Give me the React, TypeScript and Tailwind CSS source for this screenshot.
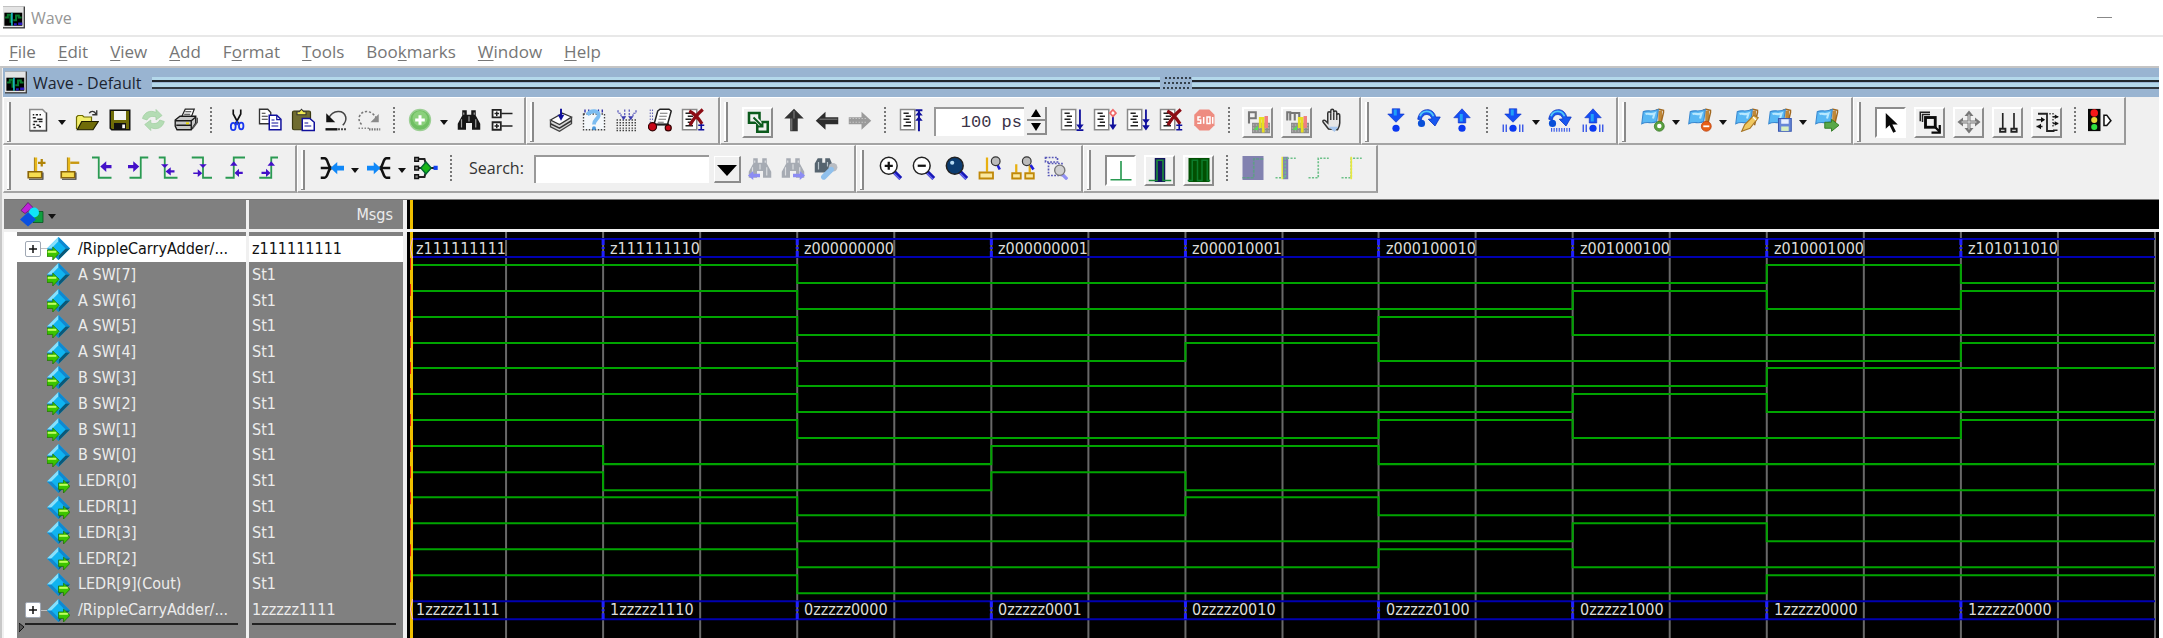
import React from "react";

type Kids = { children?: React.ReactNode };

/* ---------- icon helpers ---------- */

function Ico({ children }: Kids) {
  return (
    <svg viewBox="0 0 16 16" className="h-[24px] w-[24px] shrink-0" aria-hidden="true">
      {children}
    </svg>
  );
}

const NAVY = "#10109c";
const GREEN = "#2a9a52";
const PURPLE = "#4410c8";

const WaveLogo = () => (
  <svg viewBox="0 0 16 16" className="h-[23px] w-[22px] shrink-0" aria-hidden="true">
    <rect width="16" height="16" fill="#404040" />
    <rect width="15" height="15" fill="#e4e4e4" />
    <rect x="1" y="4.5" width="13" height="9.5" fill="#000" />
    <path d="M1.5 8h2v-2h2v5h1M7.500 10h2V6.500h2V8h2" stroke="#087a2c" strokeWidth="1.500" fill="none" />
    <path d="M6.500 4.500V14" stroke="#20d8e8" strokeWidth="1" />
    <path d="M8 13h2M11 12.500h3" stroke="#2a18c0" strokeWidth="1.800" />
  </svg>
);

const NewDoc = () => (
  <Ico>
    <path d="M2.500 1h8.500l2.500 2.500V15h-11z" fill="#fbfbfb" stroke="#8a8a8a" />
    <path d="M13.800 3v12.300H2.500" stroke="#333" fill="none" strokeWidth=".7" />
    <path d="M4.500 4.500h1m1 0h1.500m1 0h1M4.500 6.500h2m1 1h3.500M5 9h2.500m1 0h2.500M4.500 11h1.500m1 .5h2M5 13h1.500m2-.5h1.500" stroke="#222" strokeWidth="1" />
  </Ico>
);
const OpenIcon = () => (
  <Ico>
    <path d="M1 14V6l1-1h3l1 1h5v3" fill="#f2ee6a" stroke="#6d6a00" strokeWidth=".8" />
    <path d="M1.500 14.500 4.500 9h11l-3.500 5.500z" fill="#6f6c08" stroke="#1d1c00" strokeWidth=".8" />
    <path d="M9.500 3.500c1-1.800 3.500-1.800 4.500.5M14.500 1.500v3h-3" fill="none" stroke="#333" strokeWidth=".9" />
  </Ico>
);
const SaveIcon = () => (
  <Ico>
    <path d="M1.500 1.500h13v13h-12l-1-1z" fill="#6f6c08" stroke="#111" />
    <rect x="4" y="2" width="8" height="6" fill="#f4f4f4" />
    <rect x="4" y="10" width="8" height="4.500" fill="#111" />
    <rect x="9.500" y="11" width="1.800" height="2.500" fill="#fff" />
  </Ico>
);
const RefreshIcon = () => (
  <Ico>
    <path d="M1 7c1-4 5-6 9-4V1l4 4-4 3V6c-3-1-5 0-6 2z" fill="#b4dcb4" stroke="#a2cfa2" strokeWidth=".5" />
    <path d="M15.500 9c-1 4-5 6-9 4v2l-4-4 4-3v2c3 1 5 0 6-2z" fill="#b4dcb4" stroke="#a2cfa2" strokeWidth=".5" />
  </Ico>
);
const PrintIcon = () => (
  <Ico>
    <path d="M5 6 7.500.8h6L11.500 6" fill="#fff" stroke="#222" strokeWidth=".8" />
    <path d="M7.500 2.500h4M6.800 4.200h4" stroke="#333" strokeWidth=".7" />
    <path d="M.8 8 4 5.500h10.500V10l-3 4.500H2L.8 12z" fill="#c8c8c8" stroke="#1a1a1a" strokeWidth=".9" />
    <path d="M1 8.500h10.500L14.500 6M11.500 8.500v6M1.500 11.500h10" stroke="#1a1a1a" strokeWidth=".9" fill="none" />
    <path d="M8 10.200h2" stroke="#e8d800" strokeWidth="1.200" />
    <path d="M12.500 13.500l3-4V6.500" stroke="#555" strokeWidth="1" fill="none" />
  </Ico>
);
const CutIcon = () => (
  <Ico>
    <path d="M5.500 1v3L9 10.500M10.500 1v3L7 10.500" stroke="#111" strokeWidth="1.100" fill="none" />
    <ellipse cx="5.500" cy="12.300" rx="1.600" ry="2.400" fill="none" stroke="#1838f0" strokeWidth="1.200" />
    <ellipse cx="10.800" cy="12" rx="1.500" ry="2.200" fill="none" stroke="#1838f0" strokeWidth="1.200" />
    <path d="M8 8.500v3" stroke="#1838f0" strokeWidth="1.200" />
  </Ico>
);
const CopyIcon = () => (
  <Ico>
    <path d="M1 .8h5.500L8.500 3v7.500H1z" fill="#fff" stroke="#333" strokeWidth=".9" />
    <path d="M2.500 3.500h2.500M2.500 5.500h4M2.500 7.500h4" stroke="#333" strokeWidth=".8" />
    <path d="M7.500 4.800h5l2.800 2.700v7H7.500z" fill="#fff" stroke={NAVY} strokeWidth="1" />
    <path d="M12.500 5v2.800h2.500M9 8h2M9 10h4.500M9 12h4.500" stroke={NAVY} strokeWidth=".8" fill="none" />
  </Ico>
);
const PasteIcon = () => (
  <Ico>
    <rect x="1" y="2" width="12" height="12.500" rx="1" fill="#6f6c30" stroke="#3a3810" strokeWidth=".8" />
    <path d="M4 4.500V2.500h1.500L7 .8l1.500 1.700H10v2z" fill="#f0ea50" stroke="#333" strokeWidth=".7" />
    <path d="M7.500 7h5l3 2.500v5.500h-8z" fill="#fff" stroke={NAVY} strokeWidth="1" />
    <path d="M9 10h2.500M9 12h4.500" stroke={NAVY} strokeWidth=".8" />
  </Ico>
);
const UndoIcon = () => (
  <Ico>
    <path d="M3 7c3-6 10-6 11.500-1 .5 2.500-.5 4-2 5.500" fill="none" stroke="#444" strokeWidth="1" />
    <path d="M1.500 3.500v6h6z" fill="#111" />
    <path d="M1 14.200h8" stroke="#111" strokeWidth="1.600" />
    <path d="M9.500 14.200h6" stroke="#111" strokeWidth="1.400" strokeDasharray="1 1" />
  </Ico>
);
const RedoIcon = () => (
  <Ico>
    <path d="M13 7C10 1 3 1 1.500 6c-.5 2.500.5 4 2 5.500" fill="none" stroke="#777" strokeWidth="1" strokeDasharray="1.500 1.200" />
    <path d="M14.500 4v5.500H9z" fill="#8a8a8a" />
    <path d="M1 13.500h7" stroke="#888" strokeWidth="1" strokeDasharray="1 1" />
    <path d="M8 14.200h7.500" stroke="#777" strokeWidth="1.500" strokeDasharray="1 .7" />
  </Ico>
);
const AddIcon = () => (
  <Ico>
    <circle cx="8" cy="8" r="7" fill="#6fbf62" stroke="#9ccf94" strokeWidth=".9" />
    <circle cx="8" cy="7" r="5" fill="#8bd07c" />
    <path d="M8 4.800v6.400M4.800 8h6.400" stroke="#fff" strokeWidth="2" />
  </Ico>
);
const BinocPath = ({ fill }: { fill: string }) => (
  <>
    <path d="M3.500 1.500h3v3h3v-3h3V5l3 5.500v4H10V10H6v4.500H.5v-4L3.500 5z" fill={fill} />
    <path d="M4.500 3v1.500M3 7.500v5.500M11.500 3v1.500M12.500 7.500v5.500M8 5.500V9" stroke="#fff" strokeWidth=".8" opacity=".6" />
  </>
);
const FindIcon = () => (
  <Ico>
    <BinocPath fill="#161616" />
  </Ico>
);
const TreeIcon = () => (
  <Ico>
    <path d="M1.700 1.200h5.500v5H1.700zM1.700 9.500h5.500v5H1.700z" fill="#fff" stroke="#222" strokeWidth="1.200" />
    <path d="M3 3.700h3M4.500 2.300v3M3 12h3M4.500 10.500v3M7.500 3.700h7.500M7.500 12h7.500" stroke="#222" strokeWidth="1" />
  </Ico>
);
const StackIcon = () => (
  <Ico>
    <path d="M1 8.500v4l6 3 8-5V6.500" fill="#d8d8d8" stroke="#444" strokeWidth=".9" />
    <path d="M1 10.500l6 3 8-5" fill="none" stroke="#333" strokeWidth="1" />
    <path d="M1 8l8-4.500 6 2.500L7 11z" fill="#fff" stroke="#333" strokeWidth=".9" />
    <path d="M8 .5v5" stroke={NAVY} strokeWidth="1.300" />
    <path d="M5.800 4.500h4.400L8 8.500z" fill={NAVY} />
  </Ico>
);
const QueryIcon = () => (
  <Ico>
    <rect x="1" y="4" width="14" height="10.500" fill="#f4f8fb" stroke="#444" strokeWidth=".9" strokeDasharray="1 1" />
    <path d="M2 1v2M4.500 1v2M11 1v2M13.500 1v2" stroke={NAVY} strokeWidth=".8" />
    <path d="M3.500 4.500C6 1 12 1.500 11 5.500c-.6 2-3 2.500-3 5.500" fill="none" stroke="#7cbcf0" strokeWidth="2.600" />
    <circle cx="8" cy="13.500" r="1.300" fill="#4a98dc" />
  </Ico>
);
const CompileIcon = () => (
  <Ico>
    {[8, 9.8, 11.600, 13.400, 15].map((y) => (
      <path key={y} d={`M1 ${y}h14`} stroke="#444" strokeWidth=".9" strokeDasharray="1 1" />
    ))}
    <path d="M2 1.500v2h2v2M14 1.500v2h-2v2M6.500 1v5M9.500 1v5" stroke="#5050b8" strokeWidth=".8" fill="none" strokeDasharray="1.500 .8" />
    <path d="M4 5.500h3.500l-1.800 2.700zM8.800 5.500h3.500l-1.800 2.700z" fill="#3c3cae" />
  </Ico>
);
const SimIcon = () => (
  <Ico>
    <path d="M6.500 2 8 .8h6L15.500 2l-2.500 9H4z" fill="#fff" stroke="#222" strokeWidth="1" />
    <path d="M8 3.500h5M7.500 5.500h5M7 7.500h5M6.500 9.500h4" stroke="#777" strokeWidth=".8" />
    <path d="M1.500 1v9M3 1v8" stroke="#6666b8" strokeWidth=".7" strokeDasharray="1 1" />
    <path d="M4 11h10" stroke="#222" strokeWidth="1.300" />
    <circle cx="3" cy="12.500" r="2.700" fill="#c80818" stroke="#300" strokeWidth=".8" />
    <circle cx="13.500" cy="13.300" r="2" fill="#c80818" stroke="#300" strokeWidth=".8" />
  </Ico>
);
const CodeDoc = () => (
  <>
    <path d="M1 1h9.500v13.500H1z" fill="#fff" stroke="#8a8a8a" strokeWidth="1" />
    <path d="M3 3.500h3.500M4.500 5.500h3.500M3 7.500h4M4.500 9.500h3.500M3 11.800h5" stroke="#222" strokeWidth="1.100" />
  </>
);
const RedX = () => (
  <path d="M5.500 2c3 1.500 6 4.500 8.500 8.500M14.500 1C11 4 8 7.500 6 11.500" stroke="#8c0c14" strokeWidth="2.200" fill="none" />
);
const BreakIcon = () => (
  <Ico>
    <CodeDoc />
    <path d="M13.500 10v4M11.500 14.500h4M11.500 11.500h4" stroke={NAVY} strokeWidth="1.100" />
    <RedX />
  </Ico>
);
const EnvIcon = () => (
  <Ico>
    <path d="M2 2h7v6.500H2zM7.500 8h7v6.500h-7z" fill="none" stroke="#0b5a1c" strokeWidth="1.700" />
    <path d="M6.500 6l4 4" stroke="#f0f0f0" strokeWidth="3" />
    <path d="M5 5l5.500 5.500M11 7.500V11H7.500" fill="none" stroke="#0b5a1c" strokeWidth="1.300" />
  </Ico>
);
const UpArrow = () => (
  <Ico>
    <path d="M8 .5 14.500 7H10.500v8.500h-5V7H1.500z" fill="#333" />
    <path d="M8 2v5M6.500 7v8" stroke="#777" strokeWidth=".8" />
  </Ico>
);
const LeftArrow = () => (
  <Ico>
    <path d="M.5 8.500 7 2.500v3.700h8.500v4.600H7v3.700z" fill="#2c2c2c" />
    <path d="M3 7.500h12" stroke="#6a6a6a" strokeWidth=".9" />
  </Ico>
);
const RightArrow = () => (
  <Ico>
    <path d="M15.500 8.500 9 2.500v3.700H.5v4.600H9v3.700z" fill="#9a9a9a" />
    <path d="M1 7h12M1 9.500h12" stroke="#c4c4c4" strokeWidth=".7" strokeDasharray="1 1" />
  </Ico>
);
const RestartIcon = () => (
  <Ico>
    <CodeDoc />
    <path d="M13.300 2v13.500M11 1.500h4.600" stroke={NAVY} strokeWidth="1.300" />
    <path d="M10.800 5h5l-2.500-3zM10.800 8.500h5l-2.500-3z" fill={NAVY} />
  </Ico>
);
const RunIcon = () => (
  <Ico>
    <CodeDoc />
    <path d="M13.300 1v13M11 14.700h4.600" stroke={NAVY} strokeWidth="1.200" />
    <path d="M10.800 11h5l-2.500 3.200z" fill={NAVY} />
  </Ico>
);
const ContinueIcon = () => (
  <Ico>
    <CodeDoc />
    <path d="M13.300 5.500V13" stroke={NAVY} strokeWidth="1.200" />
    <path d="M10.800 11h5l-2.500 3.700z" fill={NAVY} />
    <path d="M13.300 1.200l2 2.200-2 2.200-2-2.200z" fill="#fff" stroke="#f06868" strokeWidth="1.100" />
  </Ico>
);
const RunAllIcon = () => (
  <Ico>
    <CodeDoc />
    <path d="M13.300 1v13" stroke={NAVY} strokeWidth="1.200" />
    <path d="M10.800 7.500h5l-2.500 3.200zM10.800 11.500h5l-2.500 3.500z" fill={NAVY} />
  </Ico>
);
const StopIcon = () => (
  <Ico>
    <path d="M5 1h6.500l3.500 3.500V11.500L11.500 15H5L1.500 11.500v-7z" fill="#ee8c80" />
    <path d="M5.800 6H4v2h1.800v2.200H3.500M7.800 6v4.500M10 6h2v4.300h-2zM13.800 6v4.500" stroke="#fff" strokeWidth="1" fill="none" />
  </Ico>
);
const ProfileIcon = ({ m }: { m?: boolean }) => (
  <Ico>
    <path d="M4 8.500h12V15.500H4z" fill="#8c8c8c" />
    <path d="M4.500 10h11M4.500 12h11M4.500 14h11" stroke="#c2c2c2" strokeWidth=".8" strokeDasharray="1 1" />
    <path d={m ? "M1.500 7V1.500h2V7M4 2h2.500v5M7 2h2.500v5" : "M2 9V1.500h4.500v4H2"} stroke="#777" strokeWidth="1.400" fill="none" />
    <path d="M9.500 12V5.500h2V15" stroke="#e8e020" strokeWidth="1.800" fill="none" />
    <path d="M13.500 4v8" stroke="#f08080" strokeWidth="2.300" />
    <path d="M5 13l3-2.500v3z" fill="#58dc58" />
  </Ico>
);
const HandIcon = () => (
  <Ico>
    <path d="M5 14 1.500 9.500c-.8-1 .5-1.800 1.500-1L4.500 10V3.500c0-1.300 1.800-1.300 2 0V2c0-1.500 2-1.500 2 0v1c.2-1.300 2-1.300 2 0v1.500c.5-1.200 2.200-.8 2 .7V10c0 2-.7 3-1.500 4.500z" fill="#e6e6e6" stroke="#333" strokeWidth="1" />
    <path d="M6.500 3.500V8M8.500 3v5M10.500 4v4" stroke="#333" strokeWidth=".9" />
    <path d="M5 12.500h6.500L9 16z" fill="#a8c8f0" />
  </Ico>
);
const BLUE = "#0a38f0";
const StepIn = ({ inst }: { inst?: boolean }) => (
  <Ico>
    <path d="M5.500.5h5V4H13.500L8 9.500 2.500 4h3z" fill="#1450f4" stroke="#0a2cc8" strokeWidth=".4" />
    <path d="M6.500 1h2v4h-2z" fill="#20a0f8" />
    <circle cx="8" cy="13.500" r="2.400" fill={BLUE} />
    {inst && <path d="M1.500 11v5M3.500 11v5M12.500 11v5M14.500 11v5" stroke="#3050e8" strokeWidth=".9" />}
  </Ico>
);
const StepOver = ({ inst }: { inst?: boolean }) => (
  <Ico>
    <path d="M.5 7.500C1.500-.5 11-1 12.500 6h3L12 12 7.500 7.500l2.500-.3C8.500 3 3.500 3.500 2.800 8z" fill="#1858f0" stroke="#0a30c0" strokeWidth=".5" />
    <path d="M2 5.500c1.500-4 7-4.500 9 0" stroke="#50c8f8" strokeWidth="1.200" fill="none" />
    <circle cx="3" cy="10.300" r="2.400" fill="#0a50d8" />
    {inst && <path d="M2 14.500h13.500" stroke="#4060e8" strokeWidth="2.500" strokeDasharray=".8 .9" />}
  </Ico>
);
const StepOut = ({ inst }: { inst?: boolean }) => (
  <Ico>
    <path d="M5.500 10h5V6.500H13.500L8 .5 2.500 6.500h3z" fill="#1450f4" stroke="#0a2cc8" strokeWidth=".4" />
    <path d="M6.500 4h2v5h-2z" fill="#20a0f8" />
    <circle cx="8" cy="13.500" r="2.400" fill={BLUE} />
    {inst && <path d="M1.500 11v5M3.500 11v5M12.500 11v5M14.500 11v5" stroke="#3050e8" strokeWidth=".9" />}
  </Ico>
);
const Flag = () => (
  <>
    <path d="M11.500 2v9l2.500-2V1.500z" fill="#c08838" />
    <path d="M10 1.500 12 .8l3 .7v1.500L13 11.500" stroke="#a06820" strokeWidth="1" fill="none" />
    <path d="M1.500 2.500C4 1 7 3 11.500 1l-1 8C7 11 4.500 8.500.5 10.500z" fill="#58b8f4" stroke="#3888d0" strokeWidth=".7" />
    <path d="M3 4c2-.8 3 .8 6-.3L8 7" stroke="#b8e8ff" strokeWidth="1.400" fill="none" />
  </>
);
const FlagAdd = () => (
  <Ico>
    <Flag />
    <circle cx="12.200" cy="12.200" r="3.300" fill="#5aa040" stroke="#387828" strokeWidth=".5" />
    <circle cx="12.200" cy="12" r="1.500" fill="#fff" />
  </Ico>
);
const FlagRemove = () => (
  <Ico>
    <Flag />
    <circle cx="12.200" cy="12.200" r="3.300" fill="#e86018" stroke="#b84010" strokeWidth=".5" />
    <path d="M10.200 12.200h4" stroke="#fff" strokeWidth="1.200" />
  </Ico>
);
const FlagEdit = () => (
  <Ico>
    <Flag />
    <path d="M15.500 6.500 10 13.500l-5.500 2L6.500 11l6-6z" fill="#f0c860" stroke="#a87828" strokeWidth=".8" />
    <path d="M12 6l2 2" stroke="#fff" strokeWidth=".8" />
  </Ico>
);
const FlagSave = () => (
  <Ico>
    <Flag />
    <path d="M7 7h8.500v8.500H7z" fill="#6888d8" stroke="#3858b0" strokeWidth=".7" />
    <path d="M8.800 7.500h5v3h-5z" fill="#e8f0ff" />
    <path d="M8.800 12.300h5v3h-5z" fill="#d8f0c0" />
  </Ico>
);
const FlagGo = () => (
  <Ico>
    <Flag />
    <path d="M6.500 9.500H11V7.500l5 4-5 4v-2H6.500z" fill="#58a848" stroke="#2c7820" strokeWidth=".6" />
  </Ico>
);
const PointerIcon = () => (
  <Ico>
    <path d="M4.500 2v10.500l2.500-2.300 2.500 5 1.800-.9-2.400-4.700h3.600z" fill="#0a0a0a" />
  </Ico>
);
const ZoomModeIcon = () => (
  <Ico>
    <path d="M1.500 7.500v-6h6.500M3 8V3h5" fill="none" stroke="#222" strokeWidth="1" />
    <rect x="5" y="5" width="6.500" height="6.500" fill="none" stroke="#0a0a0a" strokeWidth="1.900" />
    <path d="M11.500 11.500l2.500 2.500M14.500 10v5H9" stroke="#0a0a0a" strokeWidth="1.500" fill="none" />
  </Ico>
);
const PanIcon = () => (
  <Ico>
    <path d="M8 2v12M2 8h12" stroke="#777" strokeWidth="2" />
    <path d="M8 .3 11 4H5zM8 15.700 11 12H5zM.3 8 4 5v6zM15.700 8 12 5v6z" fill="#777" />
    <path d="M8 3v10M3 8h10" stroke="#eee" strokeWidth=".6" />
  </Ico>
);
const TwoCursorIcon = () => (
  <Ico>
    <path d="M4.500 2v10M12 2v10" stroke="#222" strokeWidth="1.100" />
    <path d="M2.700 12.500h3.600v2H2.700zM10.200 12.500h3.600v2h-3.600z" fill="#fff" stroke="#222" strokeWidth="1.200" />
  </Ico>
);
const EditModeIcon = () => (
  <Ico>
    <path d="M2 2.500h6v11.500h5" stroke="#222" strokeWidth="1.200" fill="none" />
    <path d="M9.500 2.500H12V12" stroke="#444" strokeWidth="1" fill="none" strokeDasharray="1 1" />
    <path d="M1 6.500h4M1 11h4M12 4.500h3.500M12 9h3.500M12 13.500h3" stroke="#222" strokeWidth="1.100" />
    <path d="M4 4.700l2.800 1.800L4 8.300zM4 9.200 1.200 11 4 12.800zM13.200 3v3l2.500-1.500zM13.200 7.500v3l2.500-1.500z" fill="#111" />
  </Ico>
);
const TrafficIcon = () => (
  <svg viewBox="0 0 18 16" className="h-[24px] w-[25px] shrink-0" aria-hidden="true">
    <rect x="0" y="0" width="9" height="16" fill="#080808" />
    <circle cx="4.500" cy="3" r="2.700" fill="#f81818" />
    <circle cx="4.500" cy="8" r="2.200" fill="#e8d838" />
    <circle cx="4.500" cy="13" r="2.200" fill="#30e040" />
    <path d="M11.500 4.500v7.500h2l3-3.500-3-4z" fill="#fff" stroke="#111" strokeWidth="1.100" />
  </svg>
);

/* second toolbar row */
const CursorBase = () => (
  <>
    <path d="M6.500 1v9" stroke="#e8b818" strokeWidth="1.900" />
    <path d="M5.600 1v9" stroke="#8a6408" strokeWidth=".5" />
    <path d="M1.500 10.500h9v4h-9z" fill="#f6dc50" stroke="#8a6408" strokeWidth="1.100" />
    <path d="M2 15.500h9.300v-4.500" stroke="#333" strokeWidth=".7" fill="none" />
  </>
);
const InsertCursor = () => (
  <Ico>
    <CursorBase />
    <path d="M10.500 2v5M8 4.500h5" stroke="#b08408" strokeWidth="1.500" />
  </Ico>
);
const DeleteCursor = () => (
  <Ico>
    <CursorBase />
    <path d="M7.500 4.500h6" stroke="#c89810" strokeWidth="1.600" />
  </Ico>
);
const PrevTrans = () => (
  <Ico>
    <path d="M0 1h4.500v13.500H13" fill="none" stroke={GREEN} strokeWidth="1.200" />
    <path d="M5.500 7 9.500 3.500V6H13v2.200H9.500v2.500z" fill={PURPLE} />
  </Ico>
);
const NextTrans = () => (
  <Ico>
    <path d="M3 14.500h7.500V1H15.500" fill="none" stroke={GREEN} strokeWidth="1.200" />
    <path d="M9.500 7 5.500 3.500V6H2v2.200h3.500v2.500z" fill={PURPLE} />
  </Ico>
);
const Fall = ({ next }: { next?: boolean }) => (
  <Ico>
    <path d={next ? "M.5 1H8v13.500h6" : "M.5 1H4.500v13.500h8.500"} fill="none" stroke={GREEN} strokeWidth="1.200" />
    <path d={next ? "M5.500 5.500h5L8 8z" : "M2 5.500h5L4.500 8z"} fill={PURPLE} />
    {next ? (
      <path d="M1.500 11h3V8.800L7.500 11.500l-3 2.500v-2h-3z" fill={PURPLE} />
    ) : (
      <path d="M11 9.500H8.500V7.500L5 10.300 8.500 13v-2H11z" fill={PURPLE} />
    )}
  </Ico>
);
const Rise = ({ next }: { next?: boolean }) => (
  <Ico>
    <path d={next ? "M1.500 14.500h8V1H14" : "M1 14.500h5.500V1H14"} fill="none" stroke={GREEN} strokeWidth="1.200" />
    <path d={next ? "M7 6.500h5L9.500 3.500z" : "M4 6.500h5L6.500 3.500z"} fill={PURPLE} />
    {next ? (
      <path d="M3 10.500h3V8.500l3 2.800L6 14v-2H3z" fill={PURPLE} />
    ) : (
      <path d="M12.500 10.500h-2.500V8.500L7 11.300 10 14v-2h2.500z" fill={PURPLE} />
    )}
  </Ico>
);
const Brace = () => (
  <path d="M.5 1.500h2.500c2.500 0 2 5.500 4.500 6.500-2.500 1-2 6.500-4.500 6.500H.5M.5 8h6" stroke="#111" strokeWidth="1.700" fill="none" />
);
const MergeIcon = () => (
  <Ico>
    <Brace />
    <path d="M7 8 11.500 4v2.500H16v3.200h-4.500v2.500z" fill="#1088f8" />
  </Ico>
);
const SplitIcon = () => (
  <Ico>
    <g transform="translate(16 0) scale(-1 1)">
      <Brace />
    </g>
    <path d="M9 8 4.500 4v2.500H0v3.200h4.500v2.500z" fill="#1088f8" />
  </Ico>
);
const NetIcon = () => (
  <Ico>
    <path d="M2 2h5l1 4M2 14h5l1-4M2 8h12" stroke="#222" strokeWidth="1.300" fill="none" />
    <path d="M.5 1h2.500v2.500H.5zM.5 6.800h2.500v2.500H.5zM.5 12.500h2.500V15H.5z" fill="#888" stroke="#111" strokeWidth=".9" />
    <path d="M8 4 11.500 8 8 12 4.500 8z" fill="#18b818" stroke="#063" strokeWidth=".9" />
    <path d="M13 6.500h2.800v2.800H13z" fill="#1040f0" />
  </Ico>
);
const FindPrev = () => (
  <Ico>
    <BinocPath fill="#a6abb3" />
    <path d="M0 13 3.500 10v1.800h4.500v2.400H3.500V16z" fill="#8c8cf4" />
  </Ico>
);
const FindNext = () => (
  <Ico>
    <BinocPath fill="#a6abb3" />
    <path d="M16 13 12.500 10v1.800H8v2.400h4.500V16z" fill="#8c8cf4" />
  </Ico>
);
const FindOpts = () => (
  <Ico>
    <path d="M.5 11V5l2-3.500h3v3h2v-3h3L12 5v6z" fill="#56646f" />
    <path d="M3 4v5M9 4v3" stroke="#b8c4cc" strokeWidth=".8" />
    <circle cx="12.700" cy="7.500" r="2.900" fill="#b8bcc2" />
    <path d="M11.500 9 6.500 14" stroke="#90c0ec" strokeWidth="3.600" strokeLinecap="round" />
  </Ico>
);
const Lens = ({ fill, children }: { fill: string } & Kids) => (
  <Ico>
    <path d="M9.500 10l5 5" stroke="#1818b8" strokeWidth="2.700" />
    <path d="M10 11.500l4 4" stroke="#6868f0" strokeWidth=".9" />
    <circle cx="6.500" cy="6.500" r="5.600" fill={fill} stroke="#222" strokeWidth="1" />
    {children}
  </Ico>
);
const ZoomIn = () => (
  <Lens fill="#fff">
    <path d="M3.800 6.500h5.400M6.500 3.800v5.400" stroke="#111" strokeWidth="1.500" />
  </Lens>
);
const ZoomOut = () => (
  <Lens fill="#fff">
    <path d="M3.800 6.500h5.400" stroke="#111" strokeWidth="1.500" />
  </Lens>
);
const ZoomFull = () => (
  <Lens fill="#0c3c70">
    <circle cx="4.800" cy="4.500" r="1.400" fill="#b8dcf4" />
  </Lens>
);
const ZoomCursor = () => (
  <Ico>
    <path d="M6 1v9.500" stroke="#e8b010" strokeWidth="1.500" />
    <path d="M1 11h9v4H1z" fill="#fbe9a0" stroke="#c08808" strokeWidth="1.200" />
    <path d="M13 6l1.500 3" stroke="#2020d8" strokeWidth="1.800" />
    <circle cx="11.800" cy="3.500" r="2.900" fill="#bbb" stroke="#333" strokeWidth=".8" />
  </Ico>
);
const ZoomBetween = () => (
  <Ico>
    <path d="M3.500 5.500v5.500M12.500 6v5" stroke="#e8b010" strokeWidth="1.500" />
    <path d="M.8 11.500h5.700v3.500H.8zM9.500 11.500h5.700v3.500H9.500z" fill="#fbe9a0" stroke="#c08808" strokeWidth="1.200" />
    <path d="M13 6l2 3" stroke="#2020d8" strokeWidth="1.800" />
    <circle cx="10.500" cy="3.500" r="2.900" fill="#bbb" stroke="#333" strokeWidth=".8" />
  </Ico>
);
const ZoomRange = () => (
  <Ico>
    <path d="M1 1h8v3H1zM3 5h9v8H3z" fill="none" stroke="#5858b8" strokeWidth="1.100" strokeDasharray="1.200 .9" />
    <path d="M12 12l3.500 3.500" stroke="#9090f4" strokeWidth="2.200" />
    <circle cx="10.500" cy="9.500" r="3.400" fill="#d0d0d0" stroke="#777" strokeWidth=".9" />
  </Ico>
);
const EdgePulse = () => (
  <Ico>
    <path d="M1 14.500h14M8 2v12" stroke={GREEN} strokeWidth="1.100" />
  </Ico>
);
const BarPulse = () => (
  <Ico>
    <path d="M4.500 0h7v16h-7z" fill="#141460" />
    <path d="M.5 15h5.500V1.500h4V15h5.500" stroke="#1c8a3c" strokeWidth="1.100" fill="none" />
  </Ico>
);
const FullPulse = () => (
  <Ico>
    <path d="M1 0h14v16H1z" fill="#025002" />
    <path d="M.5 15h3V1.500h3.500V15h3V1.500h3.500V15h2" stroke="#0c7c2c" strokeWidth="1" fill="none" />
  </Ico>
);
const ShadeEdge = () => (
  <Ico>
    <path d="M1 0h14v16H1z" fill="#8282b0" />
    <path d="M1 14.500h7.500V2H15" stroke="#609c88" strokeWidth="1.100" fill="none" strokeDasharray="2 .7" />
  </Ico>
);
const DashEdge = ({ mark, shade }: { mark?: boolean; shade?: boolean }) => (
  <Ico>
    {shade && <path d="M6 .5h3.500v15H6z" fill="#8080b4" />}
    <path d="M1 14.500h6.500V1.500h7" stroke="#6cc088" strokeWidth="1.100" fill="none" strokeDasharray="1.400 .9" />
    {mark && <path d={shade ? "M5.500 .5v15" : "M7.500 .5v15"} stroke="#e8e840" strokeWidth="1.100" />}
  </Ico>
);

/* ---------- toolbar pieces ---------- */

function Tool({ name, children }: { name: string } & Kids) {
  return (
    <button type="button" aria-label={name} className="flex h-[30px] w-[33px] shrink-0 items-center justify-center">
      {children}
    </button>
  );
}

function Boxed({ name, pressed, children }: { name: string; pressed?: boolean } & Kids) {
  const look = pressed
    ? "border-t-[#8c8c8c] border-l-[#8c8c8c] border-r-white border-b-white bg-white"
    : "border-t-white border-l-white border-r-[#8c8c8c] border-b-[#8c8c8c] bg-[#f0f0f0]";
  return (
    <button
      type="button"
      aria-label={name}
      aria-pressed={pressed ? true : false}
      className={`mx-1 mt-1 flex h-[31px] w-[31px] shrink-0 items-center justify-center border-2 ${look}`}
    >
      {children}
    </button>
  );
}

function Caret({ narrow }: { narrow?: boolean }) {
  return (
    <button
      type="button"
      aria-label="More"
      className={`flex h-[30px] shrink-0 items-center justify-center pt-1 ${narrow ? "w-[14px]" : "w-4"}`}
    >
      <svg viewBox="0 0 8 5" className="h-[5px] w-[8px]" aria-hidden="true">
        <path d="M0 0h8L4 5z" fill="#111" />
      </svg>
    </button>
  );
}

const Sep = () => (
  <div className="flex h-[26px] w-[18px] shrink-0 justify-center">
    <div className="w-0 border-l-2 border-dotted border-[#777]" />
  </div>
);

function Group({ pad, children }: { pad: string } & Kids) {
  return (
    <div
      className={`flex h-[48px] shrink-0 border-t border-r-2 border-b-2 border-l border-t-white border-r-[#999] border-b-[#a4a4a4] border-l-white ${pad}`}
    >
      <div className="mt-1 mr-[10px] ml-[3px] h-[40px] w-1 shrink-0 border-r-2 border-b border-[#8a8a8a] bg-white" />
      <div className="mt-[5px] flex h-[34px] items-center">{children}</div>
    </div>
  );
}

function Stripe() {
  return (
    <>
      <div className="h-[3px] bg-[#b4d8ea]" />
      <div className="h-[2px] bg-[#20262c]" />
      <div className="mt-px h-[4px] bg-[#b4d8ea]" />
      <div className="h-[2px] bg-[#303840]" />
    </>
  );
}

const MENUS: [string, string, string][] = [
  ["", "F", "ile"],
  ["", "E", "dit"],
  ["", "V", "iew"],
  ["", "A", "dd"],
  ["F", "o", "rmat"],
  ["", "T", "ools"],
  ["Boo", "k", "marks"],
  ["", "W", "indow"],
  ["", "H", "elp"],
];

/* ---------- signal data ---------- */

type Signal = {
  name: string;
  msg: string;
  dir: "in" | "out";
  bits?: string;
  bus?: string[];
};

const SIGNALS: Signal[] = [
  {
    name: "/RippleCarryAdder/...",
    msg: "z111111111",
    dir: "in",
    bus: ["z111111111", "z111111110", "z000000000", "z000000001", "z000010001", "z000100010", "z001000100", "z010001000", "z101011010"],
  },
  { name: "A SW[7]", msg: "St1", dir: "in", bits: "110000010" },
  { name: "A SW[6]", msg: "St1", dir: "in", bits: "110000101" },
  { name: "A SW[5]", msg: "St1", dir: "in", bits: "110001000" },
  { name: "A SW[4]", msg: "St1", dir: "in", bits: "110010001" },
  { name: "B SW[3]", msg: "St1", dir: "in", bits: "110000011" },
  { name: "B SW[2]", msg: "St1", dir: "in", bits: "110000100" },
  { name: "B SW[1]", msg: "St1", dir: "in", bits: "110001001" },
  { name: "B SW[0]", msg: "St1", dir: "in", bits: "100110000" },
  { name: "LEDR[0]", msg: "St1", dir: "out", bits: "100100000" },
  { name: "LEDR[1]", msg: "St1", dir: "out", bits: "110010000" },
  { name: "LEDR[3]", msg: "St1", dir: "out", bits: "110000100" },
  { name: "LEDR[2]", msg: "St1", dir: "out", bits: "110001000" },
  { name: "LEDR[9](Cout)", msg: "St1", dir: "out", bits: "110000011" },
  {
    name: "/RippleCarryAdder/...",
    msg: "1zzzzz1111",
    dir: "out",
    bus: ["1zzzzz1111", "1zzzzz1110", "0zzzzz0000", "0zzzzz0001", "0zzzzz0010", "0zzzzz0100", "0zzzzz1000", "1zzzzz0000", "1zzzzz0000"],
  },
];

const X0 = 2;
const STEP = 1745 / 9;
const PITCH = 387 / 15;
const edgeX = (i: number) => Math.round(X0 + i * STEP);
const highY = (r: number) => Math.round(4 + PITCH * (r + 0.5) - 9.5);

function tracePath(bits: string, row: number) {
  const hi = highY(row);
  let d = "";
  bits.split("").forEach((b, i) => {
    const y = b === "1" ? hi : hi + 18;
    d += `${i === 0 ? `M5 ${y}` : `V${y}`}H${edgeX(i + 1)}`;
  });
  return d;
}

function WaveDrawing() {
  const lines = Array.from({ length: 18 }, (_, i) => Math.round(X0 + ((i + 1) * STEP) / 2));
  return (
    <svg
      viewBox="0 0 1751 406"
      preserveAspectRatio="none"
      className="col-start-1 row-start-1 h-full w-full"
      aria-hidden="true"
    >
      {lines.map((x) => (
        <path key={x} d={`M${x} 0V406`} stroke="#686868" strokeWidth="2" />
      ))}
      {SIGNALS.map((s, r) =>
        s.bits ? (
          <path key={r} d={tracePath(s.bits, r)} fill="none" stroke="#00a400" strokeWidth="2" />
        ) : (
          <g key={r} fill="none" strokeWidth="2">
            <path d={`M6 ${highY(r)}H1747M6 ${highY(r) + 18}H1747`} stroke="#0000b0" />
            {s.bus!.slice(1).map((_, i) => (
              <path
                key={i}
                d={`M${edgeX(i + 1)} ${highY(r)}v18`}
                stroke="#2020ff"
                strokeWidth="3"
                strokeDasharray="6 2 2 2"
              />
            ))}
          </g>
        ),
      )}
      <path d="M4.500 0V406" stroke="#f0c000" strokeWidth="3" />
      <path d="M3.500 26V364" stroke="#e82010" strokeWidth="1" strokeDasharray="12 14" />
      <path d="M5.500 6l-2 10 2 10M5.500 367l-2 10 2 10" stroke="#f0b0e0" strokeWidth="1" fill="none" />
    </svg>
  );
}

const Diamond = ({ dir }: { dir: "in" | "out" }) => (
  <svg viewBox="0 0 16 16" className="h-[23px] w-[23px] shrink-0" aria-hidden="true">
    <path d="M8 0 16 8l-8 8-8-8z" fill="#10b4f0" />
    <path d="M8 0 0 8l2.500.5L8 3z" fill="#88e0fc" />
    <path d="M8 0l8 8h-3L8 3z" fill="#1088d0" />
    <path d="M16 8l-8 8v-3l5-5z" fill="#0a5878" />
    <path d="M0 8l8 8v-3L3 8z" fill="#1488cc" />
    {dir === "in" ? (
      <path d="M0 9h4V7l4.500 4.300L4 16v-2.500H0z" fill="#3cc400" stroke="#1c7000" strokeWidth=".5" />
    ) : (
      <path d="M8 9h3.500V7l4.500 4.300L11.500 16v-2.500H8z" fill="#3cc400" stroke="#1c7000" strokeWidth=".5" />
    )}
    {dir === "in" ? (
      <path d="M.5 10.300h6" stroke="#c0ff60" strokeWidth="1.400" />
    ) : (
      <path d="M8.500 10.300h6" stroke="#c0ff60" strokeWidth="1.400" />
    )}
  </svg>
);

const ShapesIcon = () => (
  <svg viewBox="0 0 24 24" className="h-[25px] w-[24px] shrink-0" aria-hidden="true">
    <path d="M1 8 8 0l5 5-8 6z" fill="#c020d8" stroke="#501060" strokeWidth=".7" />
    <path d="M13 9h10v11H13z" fill="#10a040" stroke="#085020" strokeWidth=".8" />
    <circle cx="14" cy="10" r="5" fill="#10e4f8" />
    <path d="M8 9.500l8 7.500-8 7L0 17z" fill="#0a50e0" />
  </svg>
);

/* ---------- page ---------- */

export default function App() {
  return (
    <div className="flex min-h-screen flex-col bg-white font-['Open_Sans','Noto_Sans',sans-serif]">
      <header className="flex h-[37px] items-center border-b-2 border-[#e8e8e8] pr-[46px] pl-[3px]">
        <WaveLogo />
        <h1 className="ml-[6px] text-[16px] leading-5 text-[#969696]">Wave</h1>
        <button type="button" aria-label="Minimize" className="ml-auto flex h-5 w-5 items-center">
          <span className="h-px w-[15px] bg-[#888]" />
        </button>
      </header>

      <nav aria-label="Main menu" className="flex h-[29px] items-center gap-[22px] pl-[9px] text-[17px] leading-6 text-[#767676]">
        {MENUS.map(([a, k, b]) => (
          <button type="button" key={a + k + b}>
            {a}
            <span className="underline underline-offset-2">{k}</span>
            {b}
          </button>
        ))}
      </nav>

      <div className="mr-1 flex flex-1 flex-col border-t-2 border-l-2 border-t-[#c4c4c4] border-l-[#c8c8c8] bg-[#f0f0f0]">
        <div className="ml-px flex h-[29px] items-center bg-[#99b4d1] pl-[2px]">
          <WaveLogo />
          <h2 className="mr-[10px] ml-[6px] text-[16px] leading-6 text-[#1c2430]">Wave - Default</h2>
          <div className="flex flex-[1007] flex-col">
            <Stripe />
          </div>
          <svg viewBox="0 0 32 14" className="h-[14px] w-8" aria-hidden="true">
            {[0, 1, 2].map((r) => (
              <path
                key={r}
                d={`M${5 - r} ${2 + r * 5}H31`}
                stroke="#34404c"
                strokeWidth="2"
                strokeDasharray="2 2"
              />
            ))}
          </svg>
          <div className="flex flex-[966] flex-col">
            <Stripe />
          </div>
        </div>

        <div role="toolbar" aria-label="Standard" className="ml-px flex">
          <Group pad="pr-[6px]">
            <Tool name="New"><NewDoc /></Tool>
            <Caret />
            <Tool name="Open"><OpenIcon /></Tool>
            <Tool name="Save"><SaveIcon /></Tool>
            <Tool name="Reload"><RefreshIcon /></Tool>
            <Tool name="Print"><PrintIcon /></Tool>
            <Sep />
            <Tool name="Cut"><CutIcon /></Tool>
            <Tool name="Copy"><CopyIcon /></Tool>
            <Tool name="Paste"><PasteIcon /></Tool>
            <Tool name="Undo"><UndoIcon /></Tool>
            <Tool name="Redo"><RedoIcon /></Tool>
            <Sep />
            <Tool name="Add"><AddIcon /></Tool>
            <Caret />
            <Tool name="Find"><FindIcon /></Tool>
            <Tool name="Collapse all"><TreeIcon /></Tool>
          </Group>
          <Group pad="pr-[9px]">
            <Tool name="Compile"><StackIcon /></Tool>
            <Tool name="Compile out of date"><QueryIcon /></Tool>
            <Tool name="Compile all"><CompileIcon /></Tool>
            <Tool name="Simulate"><SimIcon /></Tool>
            <Tool name="Break"><BreakIcon /></Tool>
          </Group>
          <Group pad="pr-[10px]">
            <Boxed name="Environment"><EnvIcon /></Boxed>
            <Tool name="Up"><UpArrow /></Tool>
            <Tool name="Back"><LeftArrow /></Tool>
            <Tool name="Forward"><RightArrow /></Tool>
            <Sep />
            <Tool name="Restart"><RestartIcon /></Tool>
            <input
              aria-label="Run length"
              defaultValue="100 ps"
              className="mt-[2px] ml-[7px] h-[29px] w-[90px] border-t-2 border-l-2 border-t-[#999] border-l-[#999] bg-white pr-[2px] text-right font-['Liberation_Mono',monospace] text-[17px] leading-6 text-[#3c3448]"
            />
            <div className="mt-[2px] mr-2 ml-[3px] flex w-5 flex-col">
              <button type="button" aria-label="Increase" className="flex h-[14px] items-center justify-center border-r-2 border-b-2 border-[#8c8c8c]">
                <svg viewBox="0 0 10 8" className="h-2 w-[10px]" aria-hidden="true"><path d="M5 0l5 8H0z" /></svg>
              </button>
              <button type="button" aria-label="Decrease" className="flex h-[14px] items-center justify-center border-r-2 border-b-2 border-[#8c8c8c]">
                <svg viewBox="0 0 10 8" className="h-2 w-[10px]" aria-hidden="true"><path d="M5 8l5-8H0z" /></svg>
              </button>
            </div>
            <Tool name="Run"><RunIcon /></Tool>
            <Tool name="Continue run"><ContinueIcon /></Tool>
            <Tool name="Run all"><RunAllIcon /></Tool>
            <Tool name="Break run"><BreakIcon /></Tool>
            <Tool name="Stop"><StopIcon /></Tool>
            <Sep />
            <Boxed name="Performance profiling"><ProfileIcon /></Boxed>
            <Boxed name="Memory profiling"><ProfileIcon m /></Boxed>
            <Tool name="Edit breakpoints"><HandIcon /></Tool>
          </Group>
          <Group pad="pr-[7px]">
            <Tool name="Step into"><StepIn /></Tool>
            <Tool name="Step over"><StepOver /></Tool>
            <Tool name="Step out"><StepOut /></Tool>
            <Sep />
            <Tool name="Step into instance"><StepIn inst /></Tool>
            <Caret narrow />
            <Tool name="Step over instance"><StepOver inst /></Tool>
            <Tool name="Step out instance"><StepOut inst /></Tool>
          </Group>
          <Group pad="pr-[8px]">
            <Tool name="Add bookmark"><FlagAdd /></Tool>
            <Caret narrow />
            <Tool name="Delete bookmark"><FlagRemove /></Tool>
            <Caret narrow />
            <Tool name="Manage bookmarks"><FlagEdit /></Tool>
            <Tool name="Save bookmarks"><FlagSave /></Tool>
            <Caret narrow />
            <Tool name="Jump to bookmark"><FlagGo /></Tool>
          </Group>
          <Group pad="pr-[7px]">
            <Boxed name="Select mode" pressed><PointerIcon /></Boxed>
            <Boxed name="Zoom mode"><ZoomModeIcon /></Boxed>
            <Boxed name="Pan mode"><PanIcon /></Boxed>
            <Boxed name="Two cursor mode"><TwoCursorIcon /></Boxed>
            <Boxed name="Edit mode"><EditModeIcon /></Boxed>
            <Sep />
            <Tool name="Stop drawing"><TrafficIcon /></Tool>
          </Group>
        </div>

        <div role="toolbar" aria-label="Wave" className="ml-px flex">
          <Group pad="pr-[10px]">
            <Tool name="Insert cursor"><InsertCursor /></Tool>
            <Tool name="Delete cursor"><DeleteCursor /></Tool>
            <Tool name="Previous transition"><PrevTrans /></Tool>
            <Tool name="Next transition"><NextTrans /></Tool>
            <Tool name="Previous falling edge"><Fall /></Tool>
            <Tool name="Next falling edge"><Fall next /></Tool>
            <Tool name="Previous rising edge"><Rise /></Tool>
            <Tool name="Next rising edge"><Rise next /></Tool>
          </Group>
          <Group pad="pr-[12px]">
            <Tool name="Expand drivers"><MergeIcon /></Tool>
            <Caret narrow />
            <Tool name="Expand readers"><SplitIcon /></Tool>
            <Caret narrow />
            <Tool name="Expand net"><NetIcon /></Tool>
            <Sep />
            <label htmlFor="search" className="mr-[9px] ml-[9px] w-[56px] text-[16px] leading-6 whitespace-nowrap text-[#333]">
              Search:
            </label>
            <input
              id="search"
              className="mt-[2px] h-[28px] w-[175px] border-t-2 border-l-2 border-t-[#999] border-l-[#999] bg-white px-1 text-[16px]"
            />
            <button
              type="button"
              aria-label="Search history"
              className="mt-[2px] mr-[2px] ml-[5px] flex h-[27px] w-[27px] items-center justify-center border-t border-r-2 border-b-2 border-l border-t-white border-r-[#8c8c8c] border-b-[#8c8c8c] border-l-white pt-1"
            >
              <svg viewBox="0 0 20 11" className="h-[11px] w-5" aria-hidden="true"><path d="M0 0h20L10 11z" /></svg>
            </button>
            <Tool name="Find previous"><FindPrev /></Tool>
            <Tool name="Find next"><FindNext /></Tool>
            <Tool name="Search options"><FindOpts /></Tool>
          </Group>
          <Group pad="pr-[9px]">
            <Tool name="Zoom in"><ZoomIn /></Tool>
            <Tool name="Zoom out"><ZoomOut /></Tool>
            <Tool name="Zoom full"><ZoomFull /></Tool>
            <Tool name="Zoom on cursor"><ZoomCursor /></Tool>
            <Tool name="Zoom between cursors"><ZoomBetween /></Tool>
            <Tool name="Zoom other window"><ZoomRange /></Tool>
          </Group>
          <Group pad="pr-[8px]">
            <Boxed name="Edge pulse" pressed><EdgePulse /></Boxed>
            <Boxed name="Bar pulse"><BarPulse /></Boxed>
            <Boxed name="Full pulse"><FullPulse /></Boxed>
            <Sep />
            <Tool name="Shaded edge"><ShadeEdge /></Tool>
            <Tool name="Marked shaded edge"><DashEdge shade mark /></Tool>
            <Tool name="Dashed edge"><DashEdge /></Tool>
            <Tool name="Marked edge"><DashEdge mark /></Tool>
          </Group>
        </div>

        <main className="mt-[6px] ml-[2px] flex flex-1 border-t border-[#777] font-['DejaVu_Sans_Condensed','DejaVu_Sans',sans-serif] text-[16px] leading-5">
          <table className="flex w-[403px] shrink-0 flex-col bg-[#808080] text-[#ececec]">
            <thead className="block">
              <tr className="flex h-[32px] border-b-[3px] border-[#f0f0f0]">
                <th className="flex w-[245px] items-center border-r-[3px] border-[#f0f0f0] pl-4">
                  <ShapesIcon />
                  <Caret />
                </th>
                <th className="flex flex-1 items-center justify-end border-r-4 border-[#f0f0f0] pr-[10px] font-normal">Msgs</th>
              </tr>
            </thead>
            <tbody className="flex flex-1 flex-col">
              <tr className="flex h-1">
                <td className="w-[245px] border-r-[3px] border-l-[13px] border-r-[#f0f0f0] border-l-white p-0" />
                <td className="flex-1 border-r-4 border-[#f0f0f0] p-0" />
              </tr>
              {SIGNALS.map((s, i) => (
                <tr key={i} className="flex flex-1">
                  <td
                    className={`flex w-[245px] items-center overflow-hidden border-r-[3px] border-l-[13px] border-r-[#f0f0f0] border-l-white p-0 whitespace-nowrap ${
                      i === 0 ? "bg-white text-[#111]" : ""
                    }`}
                  >
                    <span className="flex w-[30px] shrink-0 items-center pl-[8px]">
                      {s.bus && (
                        <>
                          <button
                            type="button"
                            aria-label="Expand"
                            className="flex h-4 w-4 items-center justify-center rounded-[2px] border border-[#a0a8b4] bg-white"
                          >
                            <svg viewBox="0 0 8 8" className="h-2 w-2" aria-hidden="true">
                              <path d="M0 4h8M4 0v8" stroke="#111" strokeWidth="1.500" />
                            </svg>
                          </button>
                          <span className="h-px flex-1 bg-[#c0c0c0]" />
                        </>
                      )}
                    </span>
                    <Diamond dir={s.dir} />
                    <span className="ml-2">{s.name}</span>
                  </td>
                  <td
                    className={`flex flex-1 items-center border-r-4 border-[#f0f0f0] p-0 pl-[3px] ${
                      i === 0 ? "bg-white text-[#111]" : ""
                    }`}
                  >
                    {s.msg}
                  </td>
                </tr>
              ))}
              <tr className="flex h-[15px]">
                <td className="flex w-[245px] items-start border-r-[3px] border-l-[13px] border-r-[#f0f0f0] border-l-white p-0 pr-2 pl-[2px]">
                  <svg viewBox="0 0 6 10" className="h-[10px] w-[6px]" aria-hidden="true">
                    <path d="M0 0l5 4-5 5z" fill="#555" stroke="#111" />
                  </svg>
                  <span className="h-[2px] flex-1 bg-[#222]" />
                </td>
                <td className="flex flex-1 items-start border-r-4 border-[#f0f0f0] p-0 pr-[7px] pl-[3px]">
                  <span className="h-[2px] flex-1 bg-[#222]" />
                </td>
              </tr>
            </tbody>
          </table>

          <section aria-label="Waveforms" className="flex min-w-0 flex-1 flex-col bg-black">
            <div className="h-[32px] border-b-[3px] border-[#f0f0f0] pl-[3px]">
              <div className="h-full w-[3px] bg-[#f0c000]" />
            </div>
            <div className="grid flex-1">
              <WaveDrawing />
              <div className="col-start-1 row-start-1 flex flex-col pt-1 pb-[15px] text-[#dcdcdc]">
                {SIGNALS.map((s, i) => (
                  <div key={i} className="grid flex-1 grid-cols-9 items-center pr-1 pl-[2px]">
                    {s.bus?.map((v, j) => (
                      <span key={j} className="pl-[7px]">
                        {v}
                      </span>
                    ))}
                  </div>
                ))}
              </div>
            </div>
          </section>
        </main>
      </div>
    </div>
  );
}
